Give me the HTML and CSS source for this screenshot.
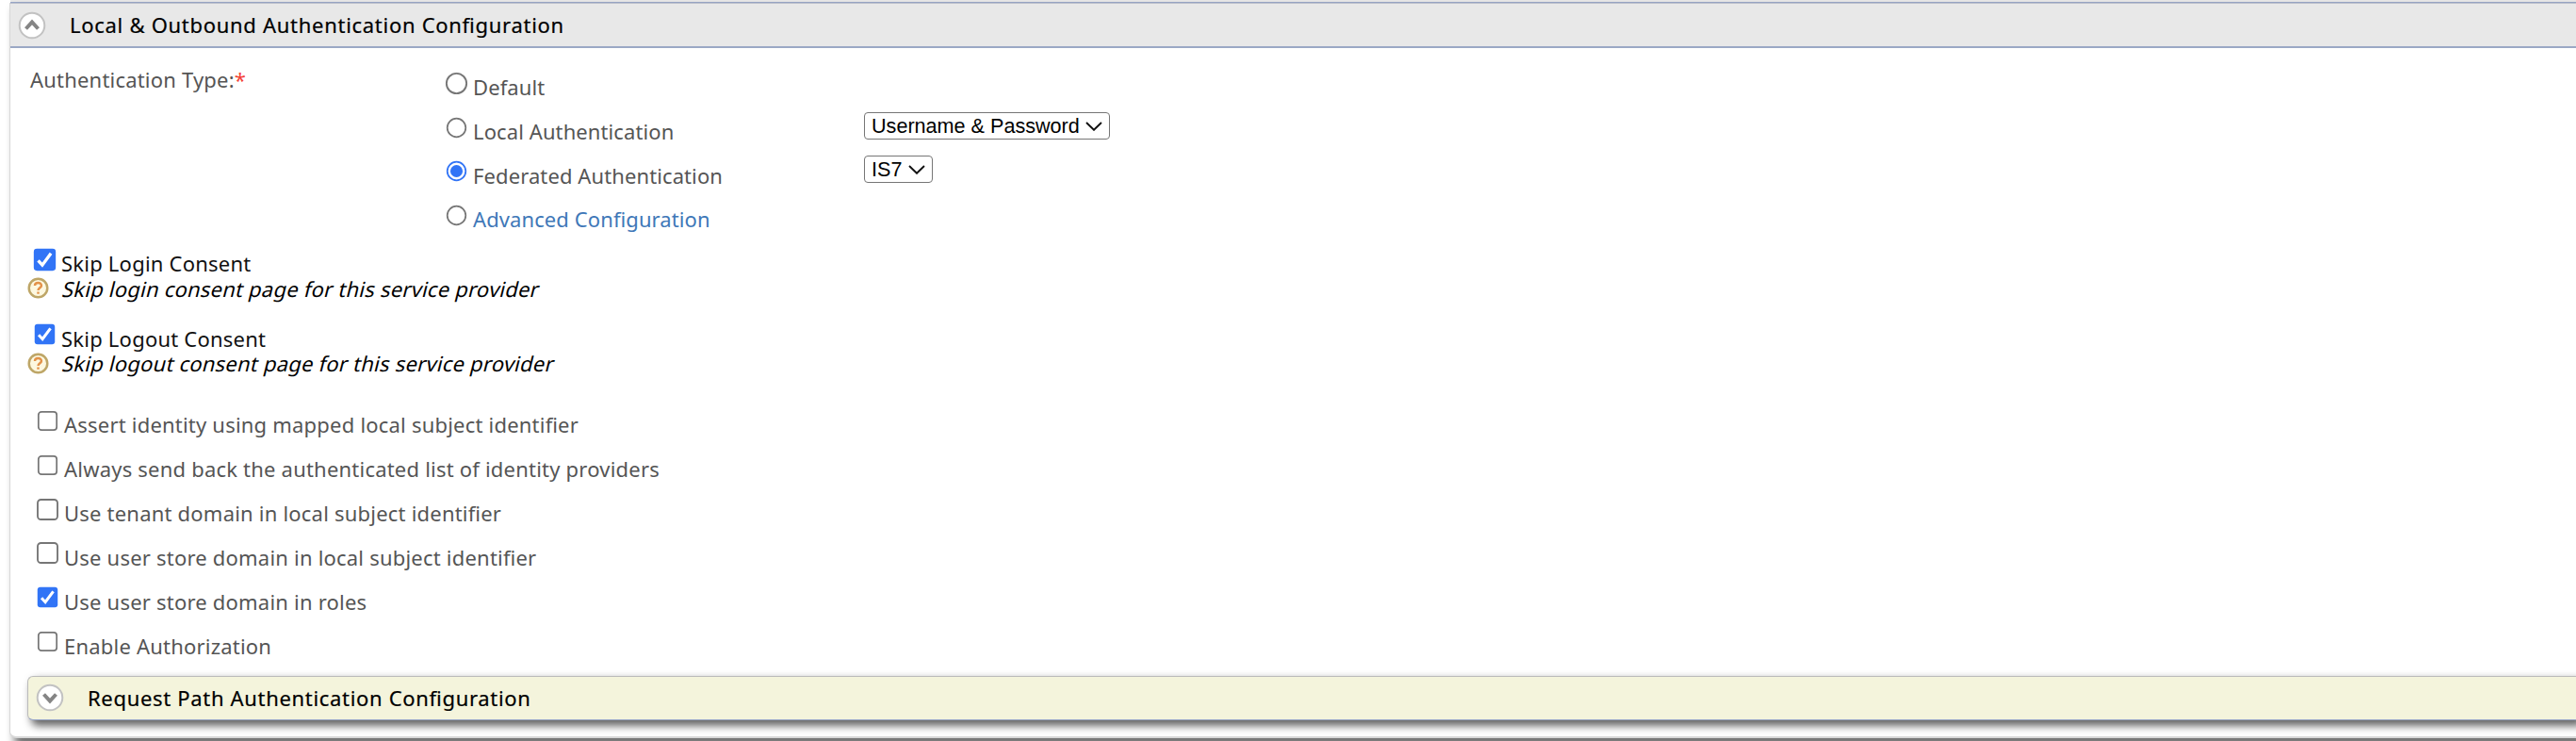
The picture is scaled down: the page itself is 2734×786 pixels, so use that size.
FILE: index.html
```
<!DOCTYPE html>
<html lang="en">
<head>
<meta charset="utf-8">
<title>Service Provider</title>
<link rel="stylesheet" href="styles.css">
</head>
<body>
<svg class="defs" aria-hidden="true">
  <symbol id="radio" viewBox="0 0 24 24"><circle cx="12" cy="12" r="10.2" fill="#fff" stroke="#767676" stroke-width="1.8"/></symbol>
  <symbol id="radio-on" viewBox="0 0 24 24"><circle cx="12" cy="12" r="10.2" fill="#fff" stroke="#3174f6" stroke-width="1.8"/><circle cx="12" cy="12" r="6.8" fill="#3174f6"/></symbol>
  <symbol id="box" viewBox="0 0 24 24"><rect x="1.9" y="1.9" width="20.2" height="20.2" rx="3.4" fill="#fff" stroke="#767676" stroke-width="1.8"/></symbol>
  <symbol id="box-on" viewBox="0 0 24 24"><rect x=".8" y=".8" width="22.4" height="22.4" rx="3.2" fill="#3174f6"/><path d="M5.300 12.800 9.500 17.400 18.300 5.600" fill="none" stroke="#fff" stroke-width="3.200"/></symbol>
  <symbol id="help" viewBox="0 0 24 24"><circle cx="12" cy="12" r="10.200" fill="#fdf8e0" stroke="#bea667" stroke-width="2.600"/><path d="M8.300 9.400c.2-4.200 7.400-4.100 7.300 0 0 2.300-3.500 2.500-3.600 5.200M12 16.200v2.400" fill="none" stroke="#e39249" stroke-width="2.500"/></symbol>
  <symbol id="up" viewBox="0 0 30 30"><circle cx="15" cy="15" r="13.300" fill="#fff" stroke="#c2c2c2" stroke-width="2"/><path d="M8.500 18.500l6.500-7 6.500 7" fill="none" stroke="#858585" stroke-width="4"/></symbol>
  <symbol id="down" viewBox="0 0 30 30"><circle cx="15" cy="15" r="13.300" fill="#fff" stroke="#c2c2c2" stroke-width="2"/><path d="M8.500 11.500l6.500 7 6.500-7" fill="none" stroke="#858585" stroke-width="4"/></symbol>
  <symbol id="chev" viewBox="0 0 18 10"><path d="M1 1l8 7.800 8-7.800" fill="none" stroke="#111" stroke-width="1.900"/></symbol>
</svg>
<div class="previous"></div>
<main class="panel">
  <h2 class="head"><svg><use href="#up"/></svg><span>Local &amp; Outbound Authentication Configuration</span></h2>
  <div class="content">
    <section class="auth">
      <div class="label"><span>Authentication Type:</span><b>*</b></div>
      <div class="options">
        <div class="row"><svg class="large"><use href="#radio"/></svg><span>Default</span></div>
        <div class="row"><svg><use href="#radio"/></svg><span>Local Authentication</span></div>
        <div class="row"><svg><use href="#radio-on"/></svg><span>Federated Authentication</span></div>
        <div class="row link"><svg><use href="#radio"/></svg><span>Advanced Configuration</span></div>
      </div>
      <div class="selects">
        <div class="select"><span>Username &amp; Password</span><svg><use href="#chev"/></svg></div>
        <div class="select"><span>IS7</span><svg><use href="#chev"/></svg></div>
      </div>
    </section>
    <section class="consent">
      <div class="row"><svg class="large"><use href="#box-on"/></svg><span>Skip Login Consent</span></div>
      <div class="hint"><svg><use href="#help"/></svg><span>Skip login consent page for this service provider</span></div>
    </section>
    <section class="consent">
      <div class="row"><svg><use href="#box-on"/></svg><span>Skip Logout Consent</span></div>
      <div class="hint"><svg><use href="#help"/></svg><span>Skip logout consent page for this service provider</span></div>
    </section>
    <section class="checks">
      <div class="row"><svg><use href="#box"/></svg><span>Assert identity using mapped local subject identifier</span></div>
      <div class="row"><svg><use href="#box"/></svg><span>Always send back the authenticated list of identity providers</span></div>
      <div class="row"><svg class="large"><use href="#box"/></svg><span>Use tenant domain in local subject identifier</span></div>
      <div class="row"><svg class="large"><use href="#box"/></svg><span>Use user store domain in local subject identifier</span></div>
      <div class="row"><svg><use href="#box-on"/></svg><span>Use user store domain in roles</span></div>
      <div class="row"><svg><use href="#box"/></svg><span>Enable Authorization</span></div>
    </section>
    <h2 class="sub"><svg><use href="#down"/></svg><span>Request Path Authentication Configuration</span></h2>
  </div>
</main>
</body>
</html>
```
FILE: styles.css
```
* { box-sizing: border-box; }
html, body { margin: 0; height: 786px; overflow: hidden; background: #fff; }
body { font: 22px/30px "Noto Sans", "Open Sans", sans-serif; color: #555; font-feature-settings: "liga" 1; }
svg { flex: none; display: block; }
.defs { position: absolute; width: 0; height: 0; }
.previous { height: 3px; margin-left: 11px; background: #e8e8e8; border-bottom: 1px solid #98a6c8; }
.panel { height: 780px; margin-left: 10px; border-left: 1px solid #d8d8d8; border-bottom: 2px solid #d8d8d8; border-bottom-left-radius: 7px; box-shadow: 7px 8px 8px 2px #777; background: #fff; }
h2 { margin: 0; font-size: 22px; font-weight: 400; letter-spacing: .68px; color: #000; display: flex; align-items: center; -webkit-text-stroke: .2px #000; }
.head { height: 48px; background: #e8e8e8; border-top: 1px solid #bcc0cb; border-bottom: 2px solid #9ba8c5; padding-left: 8px; letter-spacing: .71px; }
.head span { padding-bottom: 2px; }
h2 svg { width: 30px; height: 30px; }
h2 span { margin-left: 25px; }
.content { padding-left: 18px; }
.auth { display: grid; grid-template-columns: 443px 445px auto; padding-top: 18px; height: 205px; justify-content: start; }
.label { padding-left: 3px; line-height: 30px; letter-spacing: .2px; }
.label b { color: #f44336; font-weight: 400; }
.row { display: flex; align-items: center; height: 46.7px; letter-spacing: .1px; }
.row svg { width: 23px; height: 23px; margin: 0 6px 8px 1px; }
.row svg.large { width: 25px; height: 25px; margin: 0 5px 8px 0; }
.link { color: #4078b8; }
.selects { padding-top: 50px; display: flex; flex-direction: column; gap: 17px; align-items: start; }
.select { height: 29px; border: 1px solid #767676; border-radius: 4px; display: flex; align-items: center; padding: 0 7px; gap: 6.6px; font: 21.6px/26px "Liberation Sans", Arial, sans-serif; color: #000; }
.select svg { width: 18px; height: 10px; }
.consent { color: #111; height: 79.5px; }
.consent .row { height: 46px; padding-left: 6px; letter-spacing: .22px; }
.consent .hint { height: 26px; display: flex; align-items: center; margin-top: -9.5px; letter-spacing: .22px; }
.hint span { color: #000; transform: skewX(-14deg); }
.hint svg { width: 23px; height: 23px; margin-right: 15px; }
.checks { padding: 12px 0 8.8px 9px; }
.checks .row { height: 46.83px; letter-spacing: .21px; }
.sub { height: 47px; background: #f4f4dc; border: 1px solid #bbb; border-right: 0; border-bottom: 1px solid #98a6c8; border-radius: 6px 0 0 6px; padding-left: 8px; box-shadow: 5px 5px 8px 1px #666; }
```
